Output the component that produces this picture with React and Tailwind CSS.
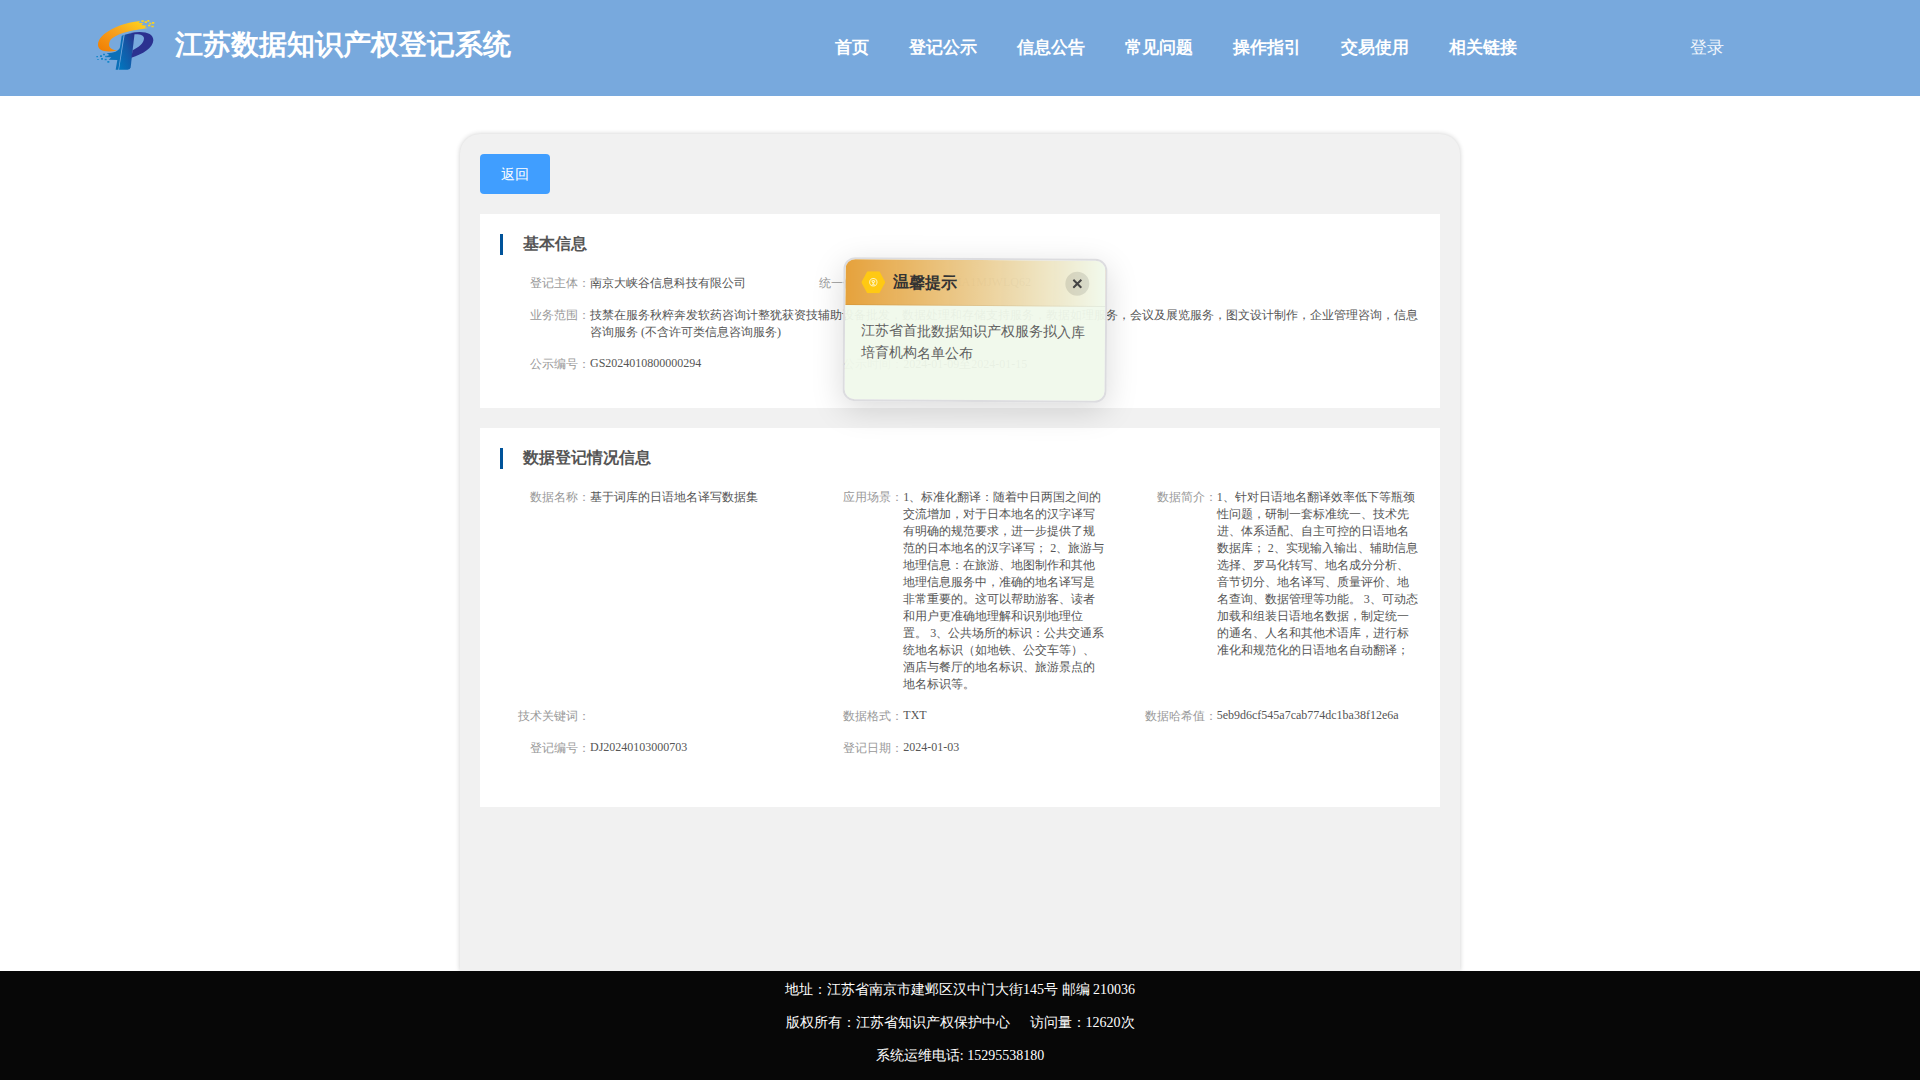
const nav = ["首页", "登记公示", "信息公告", "常见问题", "操作指引", "交易使用", "相关链接"];

const basicRows = [
  [
    { label: "登记主体：", value: "南京大峡谷信息科技有限公司" },
    { label: "统一信用代码：", value: "91320114MA1MJWLQ62" },
  ],
  [
    {
      label: "业务范围：",
      wide: true,
      value:
        "技禁在服务秋粹奔发软药咨询计整犹获资技辅助设备批发，数据处理和存储支持服务，教据如理服务，会议及展览服务，图文设计制作，企业管理咨询，信息咨询服务 (不含许可类信息咨询服务)",
    },
  ],
  [
    { label: "公示编号：", value: "GS2024010800000294" },
    { label: "公示时间：", value: "2024-01-09至2024-01-15" },
  ],
];

const dataRows = [
  [
    { label: "数据名称：", value: "基于词库的日语地名译写数据集" },
    {
      label: "应用场景：",
      value:
        "1、标准化翻译：随着中日两国之间的交流增加，对于日本地名的汉字译写有明确的规范要求，进一步提供了规范的日本地名的汉字译写； 2、旅游与地理信息：在旅游、地图制作和其他地理信息服务中，准确的地名译写是非常重要的。这可以帮助游客、读者和用户更准确地理解和识别地理位置。 3、公共场所的标识：公共交通系统地名标识（如地铁、公交车等）、酒店与餐厅的地名标识、旅游景点的地名标识等。",
    },
    {
      label: "数据简介：",
      value:
        "1、针对日语地名翻译效率低下等瓶颈性问题，研制一套标准统一、技术先进、体系适配、自主可控的日语地名数据库； 2、实现输入输出、辅助信息选择、罗马化转写、地名成分分析、音节切分、地名译写、质量评价、地名查询、数据管理等功能。 3、可动态加载和组装日语地名数据，制定统一的通名、人名和其他术语库，进行标准化和规范化的日语地名自动翻译；",
    },
  ],
  [
    { label: "技术关键词：", value: "" },
    { label: "数据格式：", value: "TXT" },
    { label: "数据哈希值：", value: "5eb9d6cf545a7cab774dc1ba38f12e6a" },
  ],
  [
    { label: "登记编号：", value: "DJ20240103000703" },
    { label: "登记日期：", value: "2024-01-03" },
  ],
];

function Logo() {
  return (
    <svg className="mt-[14px] ml-[90px] h-[60px] w-[70px] shrink-0" viewBox="0 0 210 180">
      <defs>
        <linearGradient id="ring" x1="0" y1="1" x2="1" y2="0">
          <stop offset="0" stopColor="#f07c00" />
          <stop offset="0.5" stopColor="#f7a11f" />
          <stop offset="1" stopColor="#ffd91c" />
        </linearGradient>
        <linearGradient id="stem" x1="0" y1="1" x2="1" y2="0">
          <stop offset="0" stopColor="#0078c0" />
          <stop offset="0.55" stopColor="#1458a6" />
          <stop offset="1" stopColor="#2b2f8c" />
        </linearGradient>
      </defs>
      <path d="M150 21C95 26 24 56 24 93C24 108 42 117 82 110C62 107 53 97 59 83C68 62 120 50 152 46L174 42L164 40L170 35L154 33L160 27L146 26Z" fill="url(#ring)" />
      <path d="M154 19h7v5h-7zM164 22h7v5h-7zM172 18h6v5h-6zM178 26h6v5h-6zM186 24h7v5h-7zM174 32h7v5h-7zM184 35h7v5h-7z" fill="#ffd21c" />
      <path d="M104 62Q118 57 134 56L122 160Q121 167 113 167H87Z" fill="url(#stem)" />
      <path d="M122 57C160 49 191 57 190 79C189 102 158 121 124 131L128 109C146 100 162 88 162 73C161 63 150 60 132 61Z" fill="#2b3190" />
      <path d="M95 66L101 62L85 167H77L82 138L56 137L64 130L44 129L58 123L50 118C72 117 86 112 90 100Z" fill="#0b70b8" />
      <path d="M30 124h6v5h-6zM39 119h6v5h-6zM46 125h6v5h-6zM33 132h6v5h-6zM44 134h6v5h-6zM52 141h6v5h-6zM19 126h5v4h-5zM22 135h4v3h-4z" fill="#1688cb" />
    </svg>
  );
}

function Section({ title, rows, className }) {
  return (
    <section className={`bg-white py-5 pl-5 ${className}`}>
      <h2 className="mb-5 flex h-[21px] items-start border-l-[3px] border-[#00539a] pl-5 text-[16px] leading-[19px] font-bold text-[#555]">
        {title}
      </h2>
      {rows.map((row, i) => (
        <div key={i} className="mb-[15px] flex">
          {row.map((f) => (
            <div key={f.label} className={f.wide ? "flex w-full" : "flex w-1/3"}>
              <div className="w-[90px] shrink-0 text-right whitespace-nowrap text-[#999]">{f.label}</div>
              <div className="mr-5 min-w-0 flex-1 leading-[normal] text-[#555]">{f.value}</div>
            </div>
          ))}
        </div>
      ))}
    </section>
  );
}

function Notice() {
  return (
    <div className="absolute top-[258px] left-[843px] h-[144px] w-[264px] rotate-[0.4deg] overflow-hidden rounded-xl border-2 border-[#dcdcdf] bg-[#f0f9eb]/95 bg-clip-padding shadow-[0_8px_32px_rgba(0,0,0,0.15)]">
      <div className="flex h-[46px] items-center border-b border-black/5 bg-linear-to-r from-[#e6a23c] to-transparent px-4 pt-px">
        <svg className="h-[22px] w-6" viewBox="0 0 24 22">
          <path d="M6 0H18L24 11L18 22H6L0 11Z" fill="#ffc913" />
          <g fill="none" stroke="#fff3bd" strokeWidth="1">
            <circle cx="12" cy="11" r="3.700" />
            <path d="M10.500 9.800Q12 8.500 13.500 9.800L12 12.300ZM10.500 13.500H13.500" />
          </g>
        </svg>
        <span className="ml-2 text-[16px] font-bold text-[#333]">温馨提示</span>
        <span className="ml-auto flex h-6 w-6 items-center justify-center rounded-full bg-black/10">
          <svg className="h-[10px] w-[10px]" viewBox="0 0 10 10">
            <path d="M1 1L9 9M9 1L1 9" stroke="#444" strokeWidth="2" />
          </svg>
        </span>
      </div>
      <p className="px-4 pt-[15px] text-[14px] leading-[22.4px] text-[#606060]">
        江苏省首批数据知识产权服务拟入库培育机构名单公布
      </p>
    </div>
  );
}

export default function App() {
  return (
    <div className="relative flex h-[1080px] flex-col overflow-hidden bg-white font-['Liberation_Serif',serif]">
      <header className="flex h-24 shrink-0 bg-[#78a9dd] text-white">
        <Logo />
        <h1 className="ml-[15px] w-[660px] text-[28px] leading-[90px] font-bold">江苏数据知识产权登记系统</h1>
        <nav className="flex gap-10 text-[17px] leading-[96px] font-bold">
          {nav.map((n) => (
            <span key={n}>{n}</span>
          ))}
        </nav>
        <span className="ml-[173px] text-[17px] leading-[96px] text-white/90">登录</span>
      </header>
      <main className="mx-auto mt-[38px] w-[1000px] flex-1 rounded-t-[20px] bg-[#f1f1f1] p-5 text-[12px] leading-[17px] shadow-[0_0_5px_rgba(0,0,0,0.2)]">
        <button className="mb-5 block h-10 w-[70px] rounded bg-[#409eff] text-[14px] text-white">返回</button>
        <Section title="基本信息" rows={basicRows} className="mb-5 h-[194px]" />
        <Section title="数据登记情况信息" rows={dataRows} className="h-[379px]" />
      </main>
      <footer className="relative flex h-[109px] shrink-0 flex-col items-center bg-[#070707] pt-[2px] text-[14px] leading-[33px] text-white">
        <p>地址：江苏省南京市建邺区汉中门大街145号 邮编 210036</p>
        <p className="flex gap-5">
          <span>版权所有：江苏省知识产权保护中心</span>
          <span>访问量：12620次</span>
        </p>
        <p>系统运维电话: 15295538180</p>
      </footer>
      <Notice />
    </div>
  );
}
